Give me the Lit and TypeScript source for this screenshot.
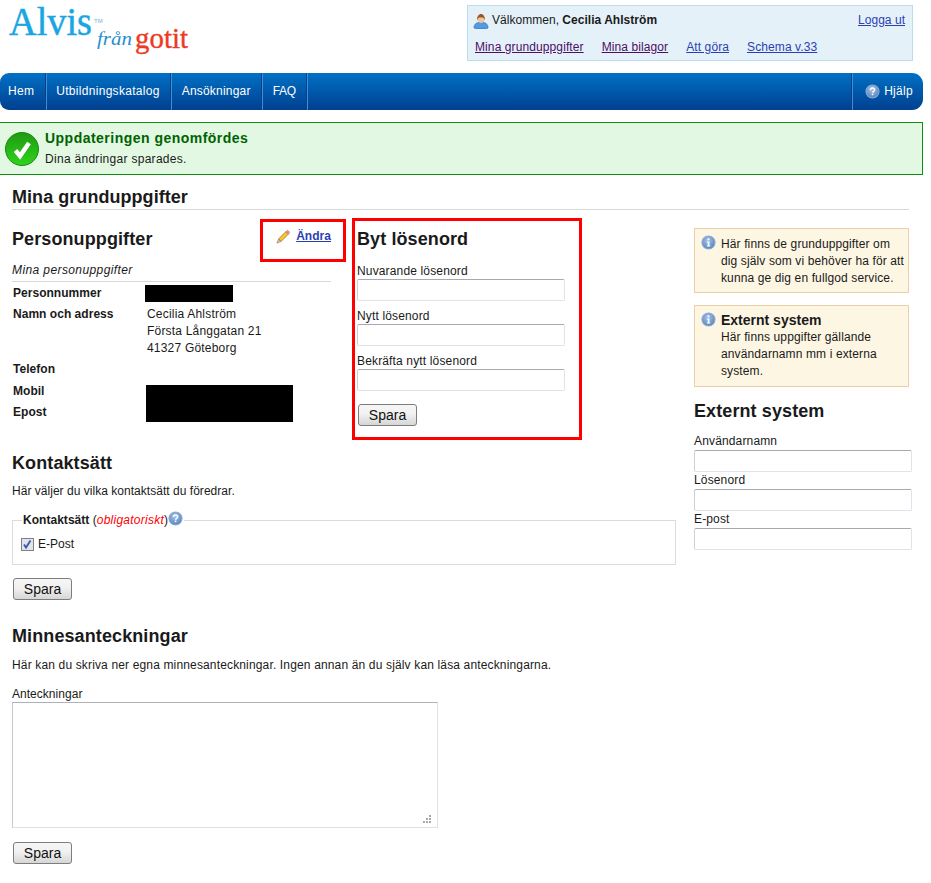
import { LitElement, html, css, svg } from "lit";
import { customElement } from "lit/decorators.js";

const infoIcon = (q = false) => html`<svg viewBox="0 0 16 16" width="15" height="15">
  <defs><radialGradient id="ig" cx="45%" cy="35%" r="70%"><stop offset="0" stop-color="#a9c4e6"/><stop offset="1" stop-color="#4e7fc0"/></radialGradient></defs>
  <circle cx="8" cy="8" r="7" fill="url(#ig)" stroke="#8fa9cc" stroke-width="1.1"/>
  ${q
    ? svg`<path d="M5.800 6.300c0-1.300 1-2 2.300-2s2.200.8 2.200 1.900c0 1.600-2.100 1.500-2.100 3" fill="none" stroke="#fff" stroke-width="1.600"/><rect x="7.300" y="10.300" width="1.600" height="1.600" fill="#fff"/>`
    : svg`<rect x="7" y="3.600" width="2" height="2" fill="#fff"/><path d="M6.200 7h2.800v4.200h1v1H6.200v-1h1V8h-1z" fill="#fff"/>`}
</svg>`;

@customElement("app-root")
export class AppRoot extends LitElement {
  static styles = css`
    :host { display: block; width: 923px; font: 12px/17px "Liberation Sans", Arial, sans-serif; color: #1a1a1a; position: relative; height: 883px; letter-spacing: .03px; }
    a { color: #2b3fb5; }
    a.visited { color: #4d0f66; }
    .header { height: 73px; display: flex; justify-content: space-between; align-items: flex-start; }
    .logo { display: block; }
    .toppanel { width: 430px; height: 54px; margin: 5px 10px 0 0; background: #e4f1f8; border: 1px solid #bcdcf0; display: flex; flex-direction: column; padding: 0 7px; }
    .welcome { display: flex; justify-content: space-between; align-items: center; height: 27px; margin-top: 1px; }
    .who { display: flex; align-items: center; gap: 3px; }
    .who svg { margin-left: -2px; }
    .toplinks { display: flex; gap: 18px; margin-top: 5px; letter-spacing: .1px; }
    .nav { height: 37px; background: linear-gradient(#0071c6, #013f8f); border-radius: 9px 11px 11px 9px; display: flex; color: #fff; align-items: stretch; letter-spacing: .3px; }
    .nav .item { display: flex; align-items: center; padding: 0 10.500px; border-right: 1px solid #0a3d86; box-shadow: 1px 0 0 #3d8fd6; }
    .nav .item:first-child { padding-left: 8px; }
    .nav .ans { letter-spacing: .2px; }
    .nav .faq { letter-spacing: -.3px; padding-right: 10px; }
    .nav .spacer { flex: 1; }
    .nav .help { display: flex; align-items: center; gap: 4px; padding: 0 10px 0 13px; box-shadow: inset 1px 0 0 #3d8fd6, -1px 0 0 #0a3d86; }
    .alert { margin-top: 12px; height: 51px; background: #e2f8e2; border: 1px solid #0f8f0f; border-left: 0; display: flex; align-items: flex-start; }
    .alert svg { margin: 9px 6px 0 5px; flex: none; }
    .alert h3 { margin: 6px 0 0; font-size: 14px; line-height: 18px; color: #006200; font-weight: bold; letter-spacing: .48px; }
    .alert p { margin: 4px 0 0; font-size: 12px; letter-spacing: .29px; line-height: 17px; }
    .content { padding: 0 11px 0 12px; }
    h1 { margin: 11px 0 0; height: 22px; font-size: 18px; line-height: 22px; font-weight: bold; border-bottom: 1px solid #d8d8d8; padding-bottom: 1px; box-sizing: content-box; width: 897px; letter-spacing: .05px; }
    h2 { margin: 0; font-size: 18px; line-height: 22px; font-weight: bold; letter-spacing: .1px; }
    .cols { display: grid; grid-template-columns: 664px 218px; column-gap: 18px; }
    .inner { display: grid; grid-template-columns: 319px 208px; column-gap: 26px; }
    .pers-head { display: flex; justify-content: space-between; margin-top: 18px; height: 22px; }
    .edit { display: flex; gap: 6px; font-weight: bold; height: 17px; }
    .edit svg { margin-top: 2px; }
    .lead { font-style: italic; margin-top: 12px; height: 20px; line-height: 16px; border-bottom: 1px solid #d8d8d8; box-sizing: border-box; letter-spacing: .4px; }
    .rows { display: grid; grid-template-columns: 135px 1fr; margin-top: 3px; }
    .rows b { padding-left: 1px; }
    .rows > * { min-height: 17px; padding-bottom: 4px; }
    .rows .tel { padding-bottom: 5px; }
    .addr { letter-spacing: .2px; }
    .pw { padding-top: 18px; }
    .pw label, .ext label { display: block; line-height: 15px; letter-spacing: .15px; }
    .pw label { margin-top: 8px; }
    .pw h2 + label { margin-top: 14px; }
    input.f { display: block; width: 208px; height: 22px; box-sizing: border-box; margin: 0; border: 1px solid #e2e2ea; border-top-color: #a9a9b0; border-left-color: #cfcfd6; border-radius: 2px; background: #fff; padding: 0; }
    .btn { display: block; width: 59px; height: 22px; padding: 0; margin: 0 0 0 1px; box-sizing: border-box; font: 14px/18px "Liberation Sans", Arial, sans-serif; color: #111; border: 1px solid #7d7d7d; border-radius: 3px; background: linear-gradient(#f6f6f6 0%, #f1f1f1 45%, #d6d6d6 100%); }
    .pw .btn { margin-top: 13px; }
    .sec h2 { margin-top: 26px; }
    .sec p { margin: 9px 0 0; line-height: 17px; }
    fieldset { margin: 15px 0 0; padding: 0 8px; border: 1px solid #dcdcdc; height: 50px; box-sizing: border-box; }
    legend { padding: 0 1px; margin-left: 1px; line-height: 11px; height: 11px; display: flex; align-items: center; }
    legend i { color: #f00; letter-spacing: .25px; }
    legend svg { margin-top: -4px; }
    .check { display: flex; align-items: center; gap: 4px; margin-top: 10px; height: 17px; }
    .sec .btn { margin-top: 13px; }
    .sec.notes h2 { margin-top: 25px; }
    .sec.notes p { margin-top: 10px; letter-spacing: .15px; }
    .notes label { display: block; margin-top: 13px; line-height: 15px; }
    .area { position: relative; width: 426px; }
    .area svg { position: absolute; right: 6px; bottom: 4px; pointer-events: none; }
    textarea { display: block; width: 426px; height: 126px; box-sizing: border-box; margin: 0; border: 1px solid #e0e0e8; border-top-color: #b0b0b8; border-left-color: #c8c8d0; background: #fff; resize: none; }
    .notes .btn { margin-top: 14px; }
    .side { padding-top: 18px; }
    .info { width: 215px; box-sizing: border-box; background: #fdf6e3; border: 1px solid #eccfa4; padding: 7px 2px 5px 26px; position: relative; line-height: 17px; letter-spacing: .12px; }
    .info svg { position: absolute; left: 6px; top: 6px; }
    .info + .info { margin-top: 12px; padding: 6px 6px 6px 26px; }
    .info b { display: block; font-size: 14px; line-height: 17px; letter-spacing: 0; }
    .ext h2 { margin-top: 13px; }
    .ext label { margin: 1px 0 1px; }
    .ext h2 + label { margin-top: 12px; }
    .ext input.f { width: 218px; }
    .red { position: absolute; border: 3px solid #f00; box-sizing: border-box; pointer-events: none; }
    .black { position: absolute; background: #000; }
  `;

  render() {
    return html`
      <div class="header">
        <svg class="logo" width="200" height="73" viewBox="0 0 200 73" role="img">
          <text x="9" y="35" font-family="Liberation Serif" font-size="40" fill="#1aa5e3" stroke="#1aa5e3" stroke-width=".5" textLength="83" lengthAdjust="spacingAndGlyphs">Alvis</text>
          <text x="94" y="23" font-family="Liberation Sans" font-size="6" font-weight="bold" fill="#9ec9e6">TM</text>
          <text x="97" y="45" font-family="Liberation Serif" font-style="italic" font-size="18" fill="#1f8fd0" textLength="35" lengthAdjust="spacingAndGlyphs">från</text>
          <text x="135" y="48" font-family="Liberation Serif" font-size="30" fill="#ee3a24" stroke="#ee3a24" stroke-width=".4" textLength="53" lengthAdjust="spacingAndGlyphs">gotit</text>
        </svg>
        <div class="toppanel">
          <div class="welcome">
            <span class="who">
              <svg width="16" height="16" viewBox="0 0 16 16">
                <path d="M1 15c0-2 .5-3.500 2-4.500 1-.6 2-1 3-1h4c1 0 2 .4 3 1 1.500 1 2 2.500 2 4.500-2 1-4 1-7 1s-5 0-7-1z" fill="#4f9be8" stroke="#3a6ea8" stroke-width=".7"/>
                <circle cx="8" cy="6.500" r="3.400" fill="#f2c49b"/>
                <path d="M4.200 7.500C3.500 3.500 6 1 8 1s4.500 2.500 3.800 6.500c-.3-1.500-1-3-2.300-3h-3c-1.300 0-2 1.500-2.300 3z" fill="#96562c"/>
              </svg>
              <span>Välkommen, <b>Cecilia Ahlström</b></span>
            </span>
            <a href="#">Logga ut</a>
          </div>
          <div class="toplinks">
            <a class="visited" href="#">Mina grunduppgifter</a>
            <a class="visited" href="#">Mina bilagor</a>
            <a href="#">Att göra</a>
            <a href="#">Schema v.33</a>
          </div>
        </div>
      </div>
      <nav class="nav">
        <span class="item">Hem</span><span class="item">Utbildningskatalog</span><span class="item ans">Ansökningar</span><span class="item faq">FAQ</span>
        <span class="spacer"></span>
        <span class="help">${infoIcon(true)}Hjälp</span>
      </nav>
      <div class="alert">
        <svg width="34" height="34" viewBox="0 0 34 34">
          <defs><linearGradient id="gg" x1="0" y1="0" x2="0" y2="1"><stop offset="0" stop-color="#1f9a12"/><stop offset="1" stop-color="#2fd41c"/></linearGradient></defs>
          <circle cx="17" cy="17" r="16.500" fill="url(#gg)" stroke="#178a10"/>
          <path d="M10.500 18.500L15 24l9-13" fill="none" stroke="#fff" stroke-width="4.500"/>
        </svg>
        <div>
          <h3>Uppdateringen genomfördes</h3>
          <p>Dina ändringar sparades.</p>
        </div>
      </div>
      <div class="content">
        <h1>Mina grunduppgifter</h1>
        <div class="cols">
          <div class="main">
            <div class="inner">
              <div>
                <div class="pers-head">
                  <h2>Personuppgifter</h2>
                  <span class="edit">
                    <svg width="14" height="14" viewBox="0 0 14 14">
                      <path d="M2.500 9L9.800 1.700l2.500 2.500L5 11.500z" fill="#f4c62f" stroke="#a9762a" stroke-width=".8"/>
                      <path d="M9.800 1.700l1-1c.4-.4 1-.4 1.400 0l1.100 1.100c.4.4.4 1 0 1.400l-1 1z" fill="#ea8f8f" stroke="#b36a6a" stroke-width=".5"/>
                      <path d="M2.500 9L.8 13.200 5 11.500z" fill="#d8b89a" stroke="#8a7058" stroke-width=".5"/>
                    </svg>
                    <a href="#">Ändra</a>
                  </span>
                </div>
                <div class="lead">Mina personuppgifter</div>
                <div class="rows">
                  <b>Personnummer</b><span></span>
                  <b>Namn och adress</b><span class="addr">Cecilia Ahlström<br />Första Långgatan 21<br />41327 Göteborg</span>
                  <b class="tel">Telefon</b><span></span>
                  <b>Mobil</b><span></span>
                  <b>Epost</b><span></span>
                </div>
              </div>
              <form class="pw" @submit=${(e: Event) => e.preventDefault()}>
                <h2>Byt lösenord</h2>
                <label>Nuvarande lösenord</label><input class="f" type="password" />
                <label>Nytt lösenord</label><input class="f" type="password" />
                <label>Bekräfta nytt lösenord</label><input class="f" type="password" />
                <button class="btn">Spara</button>
              </form>
            </div>
            <section class="sec">
              <h2>Kontaktsätt</h2>
              <p>Här väljer du vilka kontaktsätt du föredrar.</p>
              <fieldset>
                <legend><b>Kontaktsätt</b>&nbsp;(<i>obligatoriskt</i>)${infoIcon(true)}</legend>
                <div class="check">
                  <svg width="13" height="13" viewBox="0 0 13 13">
                    <rect x=".5" y=".5" width="12" height="12" fill="#dfe3ee" stroke="#808080"/>
                    <path d="M3 6.500l2 3 4.500-7" fill="none" stroke="#3c57a8" stroke-width="1.800"/>
                  </svg>
                  <span>E-Post</span>
                </div>
              </fieldset>
              <button class="btn">Spara</button>
            </section>
            <section class="sec notes">
              <h2>Minnesanteckningar</h2>
              <p>Här kan du skriva ner egna minnesanteckningar. Ingen annan än du själv kan läsa anteckningarna.</p>
              <label>Anteckningar</label>
              <div class="area">
                <textarea></textarea>
                <svg width="9" height="9" viewBox="0 0 9 9" fill="#aaa">
                  <rect x="0" y="6" width="2" height="2"/><rect x="3" y="6" width="2" height="2"/><rect x="6" y="6" width="2" height="2"/>
                  <rect x="3" y="3" width="2" height="2"/><rect x="6" y="3" width="2" height="2"/>
                  <rect x="6" y="0" width="2" height="2"/>
                </svg>
              </div>
              <button class="btn">Spara</button>
            </section>
          </div>
          <aside class="side">
            <div class="info">${infoIcon()}Här finns de grunduppgifter om dig själv som vi behöver ha för att kunna ge dig en fullgod service.</div>
            <div class="info">${infoIcon()}<b>Externt system</b>Här finns uppgifter gällande användarnamn mm i externa system.</div>
            <div class="ext">
              <h2>Externt system</h2>
              <label>Användarnamn</label><input class="f" />
              <label>Lösenord</label><input class="f" type="password" />
              <label>E-post</label><input class="f" />
            </div>
          </aside>
        </div>
      </div>
      <div class="black" style="left:145px;top:285px;width:88px;height:17px"></div>
      <div class="black" style="left:146px;top:385px;width:147px;height:37px"></div>
      <div class="red" style="left:260px;top:219px;width:86px;height:43px"></div>
      <div class="red" style="left:352px;top:218px;width:230px;height:222px"></div>
    `;
  }
}
